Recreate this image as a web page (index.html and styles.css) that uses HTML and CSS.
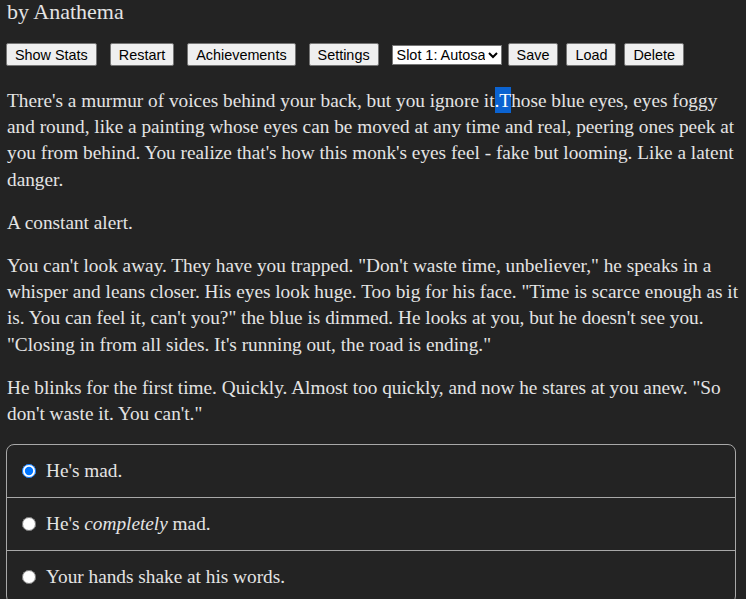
FILE: index.html
```html
<!DOCTYPE html>
<html lang="en">
<head>
<meta charset="UTF-8">
<meta name="viewport" content="width=device-width, initial-scale=1.0">
<title>by Anathema</title>
<link rel="stylesheet" href="styles.css">
</head>
<body>
<div class="page">
    <div class="author">by Anathema</div>

    <div class="toolbar">
        <button class="tool-btn">Show Stats</button>
        <button class="tool-btn">Restart</button>
        <button class="tool-btn">Achievements</button>
        <button class="tool-btn">Settings</button>
        <select class="slot-select">
            <option>Slot 1: Autosave</option>
            <option>Slot 2</option>
            <option>Slot 3</option>
        </select>
        <button class="tool-btn small">Save</button>
        <button class="tool-btn small">Load</button>
        <button class="tool-btn small">Delete</button>
    </div>

    <div class="story">
        <p>There's a murmur of voices behind your back, but you ignore it<span class="sel">.T</span>hose blue eyes, eyes foggy and round, like a painting whose eyes can be moved at any time and real, peering ones peek at you from behind. You realize that's how this monk's eyes feel - fake but looming. Like a latent danger.</p>
        <p>A constant alert.</p>
        <p>You can't look away. They have you trapped. "Don't waste time, unbeliever," he speaks in a whisper and leans closer. His eyes look huge. Too big for his face. "Time is scarce enough as it is. You can feel it, can't you?" the blue is dimmed. He looks at you, but he doesn't see you. "Closing in from all sides. It's running out, the road is ending."</p>
        <p>He blinks for the first time. Quickly. Almost too quickly, and now he stares at you anew. "So don't waste it. You can't."</p>
    </div>

    <form class="choices">
        <label class="choice"><input type="radio" name="choice" checked><span>He's mad.</span></label>
        <label class="choice"><input type="radio" name="choice"><span>He's <i>completely</i> mad.</span></label>
        <label class="choice"><input type="radio" name="choice"><span>Your hands shake at his words.</span></label>
    </form>
</div>
</body>
</html>
```

FILE: styles.css
```css
body {
    margin: 0;
    background-color: #232323;
    color: #e4e4e4;
    font-family: "Liberation Serif", "Times New Roman", serif;
    font-size: 19.3px;
}

.page {
    padding: 0 3px 0 7px;
}

.author {
    font-size: 22px;
    line-height: 26px;
    margin-top: -1px;
}

.toolbar {
    display: flex;
    align-items: center;
    margin-top: 18px;
    margin-left: -1px;
}

.tool-btn {
    font-family: "Liberation Sans", Arial, sans-serif;
    font-size: 14.4px;
    height: 23px;
    padding: 0 8px;
    margin-right: 13px;
    background-color: #efefef;
    color: #000;
    border: 1px solid #767676;
    border-radius: 2px;
}

.tool-btn.small {
    margin-right: 8px;
}

.slot-select {
    font-family: "Liberation Sans", Arial, sans-serif;
    font-size: 14.4px;
    width: 110px;
    height: 20px;
    margin-right: 6px;
    background-color: #fff;
    color: #000;
    border: 1px solid #767676;
    border-radius: 0;
}

.story {
    margin-top: 22px;
}

.story p {
    margin: 0 0 17px 0;
    line-height: 26.2px;
}

.sel {
    background-color: #0b63d1;
    color: #fff;
    padding: 3px 0 2px;
}

.choices {
    border: 1px solid #a8a8a8;
    border-radius: 8px;
    margin: 1px 7px 0 -1px;
}

.choice {
    display: flex;
    align-items: center;
    gap: 10px;
    height: 52px;
    padding: 0 15px;
    border-bottom: 1px solid #a8a8a8;
}

.choice:last-child {
    border-bottom: none;
}

.choice input {
    margin: 0;
    width: 14px;
    height: 14px;
}
```
